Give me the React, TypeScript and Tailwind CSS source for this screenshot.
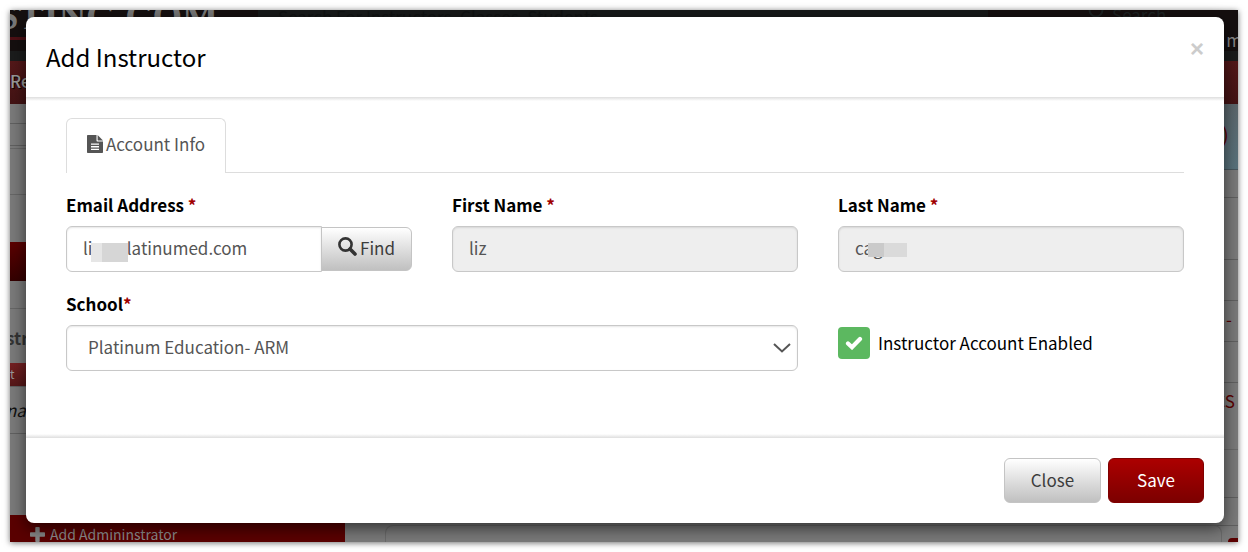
import React from "react";

function Required() {
  return <span className="text-[#a00000]">*</span>;
}

function FileIcon() {
  return (
    <svg viewBox="0 0 16 18" className="h-[18px] w-4 shrink-0" fill="currentColor" aria-hidden="true">
      <path
        fillRule="evenodd"
        d="M1 0h8.5v5.5c0 .6.4 1 1 1H16V17c0 .6-.4 1-1 1H1c-.6 0-1-.4-1-1V1c0-.6.4-1 1-1zm3 8.5v1.3h8V8.500zm0 2.600v1.300h8v-1.300zm0 2.600V15h8v-1.300z"
      />
      <path d="M10.600 0l5.400 5.400h-4.900c-.3 0-.5-.2-.5-.5z" />
    </svg>
  );
}

function SearchIcon() {
  return (
    <svg viewBox="0 0 19 19" className="-mt-1 size-[19px] shrink-0 text-[#333]" fill="none" stroke="currentColor" aria-hidden="true">
      <circle cx="7.500" cy="7.500" r="6.100" strokeWidth="2.600" />
      <path d="M12 12l5 5" strokeWidth="3.600" strokeLinecap="round" />
    </svg>
  );
}

function CheckIcon() {
  return (
    <svg viewBox="0 0 18 14" className="pointer-events-none relative h-3.5 w-[18px] text-white" fill="none" stroke="currentColor" aria-hidden="true">
      <path d="M3 7.500L7 11.200L15 3" strokeWidth="4.200" strokeLinecap="round" />
    </svg>
  );
}

function PlusIcon() {
  return (
    <svg viewBox="0 0 15 15" className="mr-[5px] size-[15px] shrink-0 text-[#858585]" fill="currentColor" aria-hidden="true">
      <path d="M6 0h3a.7.7 0 0 1 .7.7v4.600h4.600a.7.7 0 0 1 .7.7v3a.7.7 0 0 1-.7.7H9.700v4.600a.7.7 0 0 1-.7.7H6a.7.7 0 0 1-.7-.7V9.700H.7A.7.7 0 0 1 0 9V6a.7.7 0 0 1 .7-.7h4.600V.7A.7.7 0 0 1 6 0z" />
    </svg>
  );
}

const labelClass = "block h-6 text-[17px] leading-[22px] font-bold text-black";
const inputClass =
  "block h-[46px] w-full min-w-0 rounded-md border border-[#c8c8c8] px-4 pb-[3px] text-[17px] text-[#555] shadow-[inset_0_1px_2px_rgba(0,0,0,0.1)] outline-none";
const grayButton =
  "border border-[#c4c4c4] bg-linear-to-b from-white to-[#c0c0c0] pb-0.5 text-[#3c3c3c] text-[17px]";

function Backdrop() {
  return (
    <div aria-hidden="true" className="absolute inset-0 overflow-hidden bg-[#7a7a7a]">
      <div className="flex h-[27px] items-end overflow-hidden bg-[#171919]">
        <div className="flex w-[248px] shrink-0 justify-end bg-[#150f0f] pr-10">
          <span className="font-['Liberation_Serif',serif] text-[38px] leading-[42px] font-bold whitespace-nowrap text-[#777]">
            STING.COM
          </span>
        </div>
        <div className="h-full grow pl-5 text-[17px] leading-[14px] text-[#101212]">
          Search For Instructors, Classes, Students
        </div>
        <div className="flex h-full w-[250px] shrink-0 items-start gap-2 bg-[#150f0f] pl-[100px] text-[17px] leading-[10px] text-[#1c2222]">
          <svg viewBox="0 0 16 16" className="-mt-2 size-4" fill="none" stroke="currentColor" strokeWidth="2">
            <circle cx="8" cy="8" r="6.500" />
          </svg>
          Search
        </div>
      </div>
      <div className="h-[14px] bg-linear-to-r from-[#4d1015] from-50% to-[#150f0f] to-50% pt-[3px]">
        <div className="h-full bg-[#150f0f]" />
      </div>
      <div className="h-[10px] bg-[#1b1c1c]" />
      <div className="h-[43px] bg-linear-to-b from-[#541819] to-[#431314] text-[17px] leading-[40px] font-medium text-[#999] text-shadow-[1px_1px_1px_#000]">
        Re
      </div>
      <div className="flex justify-between text-[#333]">
        <div className="w-[335px] shrink-0">
          <div className="h-5 border-b border-[#606060]" />
          <div className="h-[22px] border-b border-[#606060]" />
          <div className="h-[3px] border-b border-[#686868]" />
          <div className="h-[46px] border-b border-[#666]" />
          <div className="h-[47px]" />
          <div className="h-[39px] bg-linear-to-b from-[#5c0000] to-[#340000]" />
          <div className="h-7 border-b border-[#666]" />
          <div className="-ml-1 h-[54px] text-[17px] leading-[58px] font-bold">str</div>
          <div className="h-[23px] bg-linear-to-b from-[#742022] to-[#551718] text-xs leading-[22px] text-[#999]">
            t
          </div>
          <div className="-ml-1 h-[48px] border-t border-b border-[#606060] text-[17px] leading-[46px] text-[#111] italic">
            na
          </div>
        </div>
        <div className="w-[26px] shrink-0">
          <div className="h-[66px] border-b border-[#48575e] bg-linear-to-b from-[#5c676c] to-[#58727c] pl-2.5 text-xl leading-[60px] text-[#5a0000]">
            )
          </div>
          <div className="h-7 border-b border-[#606060]" />
          <div className="h-[62px] border-b border-[#606060]" />
          <div className="h-[41px] border-b border-[#606060]" />
          <div className="h-[41px] border-b border-[#606060] pr-1.5 text-right text-[17px] leading-9 text-[#5a0000]">
            -
          </div>
          <div className="h-[41px] border-b border-[#606060]" />
          <div className="h-[67px] border-b border-[#6a6a6a] pr-[3px] text-right text-[17px] leading-9 text-[#5a0000]">
            CS
          </div>
          <div className="h-12 border-b border-[#606060]" />
          <div className="h-7 border-b border-[#606060]" />
        </div>
      </div>
      <span className="absolute top-[18px] right-[-4px] text-[17px] leading-6 text-[#888]">m</span>
      <div className="absolute bottom-0 left-0 flex h-[27px] w-[335px] items-end bg-[#5a0000] pl-5 text-sm leading-4 text-[#8a8a8a]">
        <PlusIcon />
        Add Admininstrator
      </div>
      <div className="absolute right-4 bottom-0 left-[375px] h-[17px] rounded-t-lg border border-b-0 border-[#6a6a6a]" />
      <div className="absolute right-0 bottom-0 h-1 w-2.5 rounded-tl bg-[#5a0000]" />
    </div>
  );
}

export default function App() {
  return (
    <div className="bg-white p-2.5 font-['Noto_Sans_CJK_SC',sans-serif]">
      <div className="relative pt-[7px] pr-3.5 pb-[19px] pl-4 shadow-[0_1px_6px_rgba(0,0,0,0.55)]">
        <Backdrop />
        <div
          role="dialog"
          aria-labelledby="dialog-title"
          className="relative rounded-lg bg-white shadow-[0_5px_16px_rgba(0,0,0,0.6)]"
        >
          <header className="flex h-20 items-center justify-between px-5">
            <h1 id="dialog-title" className="text-2xl text-black">
              Add Instructor
            </h1>
            <button
              type="button"
              aria-label="Close dialog"
              className="-mt-4 font-['Liberation_Sans',sans-serif] text-2xl leading-6 font-bold text-[#ccc]"
            >
              ×
            </button>
          </header>

          <form className="flex h-[341px] flex-col">
            <div className="h-1 shrink-0 bg-linear-to-b from-[#dedede] to-white" />
            <div className="grow px-10 pt-[17px]">
              <div role="tablist" className="flex border-b border-[#ddd]">
                <button
                  type="button"
                  role="tab"
                  aria-selected="true"
                  className="-mb-px flex h-[55px] items-center gap-[3px] rounded-t-md border border-b-0 border-[#ddd] bg-white px-5 pb-1 text-[17px] text-[#555]"
                >
                  <FileIcon />
                  Account Info
                </button>
              </div>

              <div className="mt-[21px] grid grid-cols-3 gap-x-10 gap-y-[21px]">
                <div>
                  <label htmlFor="email" className={labelClass}>
                    Email Address <Required />
                  </label>
                  <div className="relative mt-2 flex items-start">
                    <input
                      id="email"
                      type="text"
                      defaultValue={"li\u00a0\u00a0\u00a0\u00a0\u00a0\u00a0\u00a0\u00a0\u00a0latinumed.com"}
                      className={inputClass + " rounded-r-none bg-white"}
                    />
                    <div className="absolute top-[17px] left-[25px] flex h-[19px]">
                      <div className="w-[11px] bg-[#e6e6e6]" />
                      <div className="w-[26px] bg-[#d6d6d6]" />
                    </div>
                    <button
                      type="button"
                      className={grayButton + " mt-px -ml-px flex h-11 shrink-0 items-center gap-[3px] rounded-r-md px-4"}
                    >
                      <SearchIcon />
                      Find
                    </button>
                  </div>
                </div>
                <div>
                  <label htmlFor="first" className={labelClass}>
                    First Name <Required />
                  </label>
                  <input id="first" type="text" readOnly value="liz" className={inputClass + " mt-2 bg-[#eee]"} />
                </div>
                <div>
                  <label htmlFor="last" className={labelClass}>
                    Last Name <Required />
                  </label>
                  <div className="relative mt-2">
                    <input id="last" type="text" readOnly value="cag" className={inputClass + " bg-[#eee]"} />
                    <div className="absolute top-[17px] left-[30px] flex h-3.5">
                      <div className="w-4 bg-[#cacaca]" />
                      <div className="w-[23px] bg-[#dadada]" />
                    </div>
                  </div>
                </div>
                <div className="col-span-2">
                  <label htmlFor="school" className={labelClass}>
                    School
                    <Required />
                  </label>
                  <div className="relative mt-2">
                    <select id="school" className={inputClass + " appearance-none bg-white pl-[21px]"}>
                      <option>Platinum Education- ARM</option>
                    </select>
                    <svg
                      viewBox="0 0 18 10"
                      fill="none"
                      stroke="#555"
                      strokeWidth="2"
                      className="pointer-events-none absolute top-[18px] right-[7px] h-2.5 w-[18px]"
                    >
                      <path d="M1 1l8 7.500L17 1" />
                    </svg>
                  </div>
                </div>
                <label className="mb-3 flex items-center gap-2 self-end text-[17px] leading-8 text-black">
                  <span className="relative flex size-8 items-center justify-center">
                    <input type="checkbox" defaultChecked className="absolute inset-0 size-8 appearance-none rounded bg-[#5cb860]" />
                    <CheckIcon />
                  </span>
                  Instructor Account Enabled
                </label>
              </div>
            </div>
            <div className="h-1 shrink-0 bg-linear-to-t from-[#dedede] to-white" />
          </form>

          <footer className="flex h-[85px] items-center justify-end gap-[7px] px-5">
            <button type="button" className={grayButton + " h-[45px] rounded-md px-[26px]"}>
              Close
            </button>
            <button
              type="button"
              className="h-[45px] rounded-md border border-[#800000] bg-linear-to-b from-[#ac0000] to-[#7c0000] px-7 pb-0.5 text-[17px] text-white"
            >
              Save
            </button>
          </footer>
        </div>
      </div>
    </div>
  );
}
